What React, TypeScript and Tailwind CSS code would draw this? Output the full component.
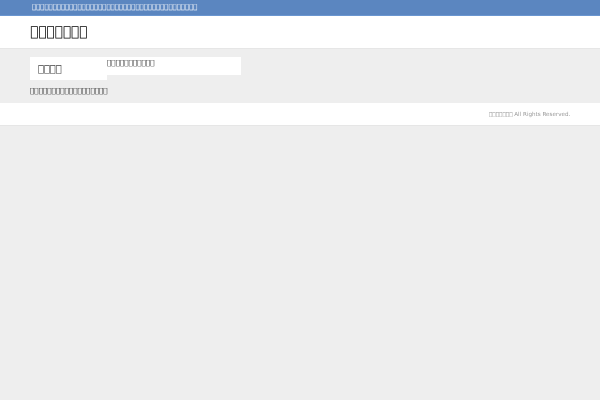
const t = (n: number) => "\uE000".repeat(n);

export default function App() {
  return (
    <div className="min-h-[400px] bg-[#eeeeee] font-['DejaVu_Sans',sans-serif] text-[#333]">
      <div className="h-[16px] bg-[#5b86c0] border-b border-[#6a96d0] pl-[32px] text-[6.9px] leading-[15px] text-white">
        <span className="inline-block will-change-transform">{t(40)}</span>
      </div>
      <div className="h-[32px] bg-white pl-[30px] text-[13.6px] leading-[32px] text-black">
        <span className="inline-block -translate-y-[1px] will-change-transform">{t(7)}</span>
      </div>
      <div className="h-[55px] border-t border-[#e6e6e6] px-[30px] pt-[8px]">
        <div className="flex items-start">
          <div className="h-[23px] w-[77px] bg-white pl-[8px] pt-[5px] text-[9.8px] leading-[14px] text-[#444]">
            <span className="inline-block will-change-transform">{t(4)}</span>
          </div>
          <div className="h-[18px] w-[134px] bg-white text-[7.2px] leading-[12px] text-[#111]">
            <span className="inline-block will-change-transform">{t(11)}</span>
          </div>
        </div>
        <div className="mt-[5px] text-[7.2px] leading-[12px] text-[#111]">
          <span className="inline-block will-change-transform">{t(18)}</span>
        </div>
      </div>
      <div className="flex h-[23px] justify-end border-b border-[#e6e6e6] bg-white pr-[30px] text-[5.6px] leading-[23px] text-[#999]">
        <span className="inline-block will-change-transform">{t(7)} All Rights Reserved.</span>
      </div>
    </div>
  );
}
